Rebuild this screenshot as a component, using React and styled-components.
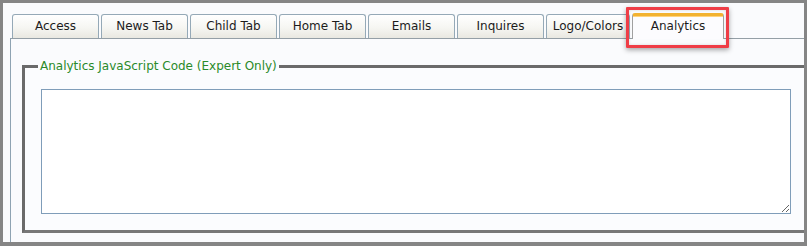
import React from "react";
import styled, { createGlobalStyle } from "styled-components";

const GlobalStyle = createGlobalStyle`
  html, body {
    margin: 0;
    padding: 0;
    background: #ffffff;
  }
  body {
    font-family: "DejaVu Sans", Verdana, sans-serif;
  }
`;

const tabs = [
  { label: "Access" },
  { label: "News Tab" },
  { label: "Child Tab" },
  { label: "Home Tab" },
  { label: "Emails" },
  { label: "Inquires" },
  { label: "Logo/Colors", width: 84 },
  { label: "Analytics", width: 92, active: true },
];

export default function App() {
  return (
    <>
      <GlobalStyle />
      <Frame>
        <TabStrip>
          {tabs.map((t) => (
            <Tab key={t.label} $w={t.width} $active={t.active}>
              {t.label}
              {t.active && <Highlight />}
            </Tab>
          ))}
        </TabStrip>
        <Panel>
          <CodeFieldset>
            <Legend>Analytics JavaScript Code (Expert Only)</Legend>
            <CodeArea />
          </CodeFieldset>
        </Panel>
      </Frame>
    </>
  );
}

const Frame = styled.div`
  position: relative;
  box-sizing: border-box;
  width: 807px;
  height: 246px;
  border: 3px solid #858585;
  border-bottom-width: 4px;
  background: #fafbfd;
  overflow: hidden;
  padding: 9px 0 0 7px;
`;

const TabStrip = styled.div`
  display: flex;
  align-items: flex-end;
  gap: 2px;
  padding-left: 2px;
  height: 26px;
`;

const Tab = styled.div`
  position: relative;
  box-sizing: border-box;
  flex: none;
  width: ${(p) => p.$w || 87}px;
  height: ${(p) => (p.$active ? 26 : 24)}px;
  margin-bottom: ${(p) => (p.$active ? -1 : 0)}px;
  border: 1px solid #95a9b7;
  border-bottom: none;
  border-radius: 3px 3px 0 0;
  ${(p) =>
    p.$active
      ? `
    z-index: 2;
    border-color: #a0a0a0;
    border-top: 3px solid #f2b230;
    box-shadow: inset 0 1px 0 #ffd37c;
    background: #fcfcfe;
    padding-top: 3px;
  `
      : `
    background: linear-gradient(#ffffff 0%, #f6f6f2 55%, #e9e8e1 100%);
    padding-top: 4px;
  `}
  font-size: 12px;
  line-height: 15px;
  color: #1c1c1c;
  text-align: center;
  white-space: nowrap;
`;

const Highlight = styled.span`
  position: absolute;
  left: -7px;
  right: -6px;
  top: -9px;
  bottom: -9px;
  border: 3px solid #ef3d46;
  border-radius: 1px;
  box-shadow: 0 2px 5px rgba(0, 0, 0, 0.35), inset 0 0 3px rgba(0, 0, 0, 0.15);
  pointer-events: none;
`;

const Panel = styled.div`
  position: relative;
  z-index: 1;
  margin-right: -17px;
  border-top: 1px solid #949fa6;
  border-left: 1px solid #8ea3b2;
  background: #fafbfd;
  padding: 20px 11px 0 11px;
  height: 220px;
`;

const CodeFieldset = styled.fieldset`
  margin: 0;
  border: 3px solid #6f6f6f;
  border-color: #6a6a6a #777777 #777777 #6a6a6a;
  padding: 16px 16px 16px 16px;
  background: #fbfcfe;
`;

const Legend = styled.legend`
  margin-left: -3px;
  padding: 0 2px;
  font-size: 12px;
  line-height: 14px;
  color: #2a8a2a;
`;

const CodeArea = styled.textarea`
  display: block;
  box-sizing: border-box;
  width: 100%;
  height: 125px;
  margin: 0;
  border: 1px solid #7f9db9;
  background: #ffffff;
  font-family: "DejaVu Sans", sans-serif;
  font-size: 12px;
  outline: none;
`;
